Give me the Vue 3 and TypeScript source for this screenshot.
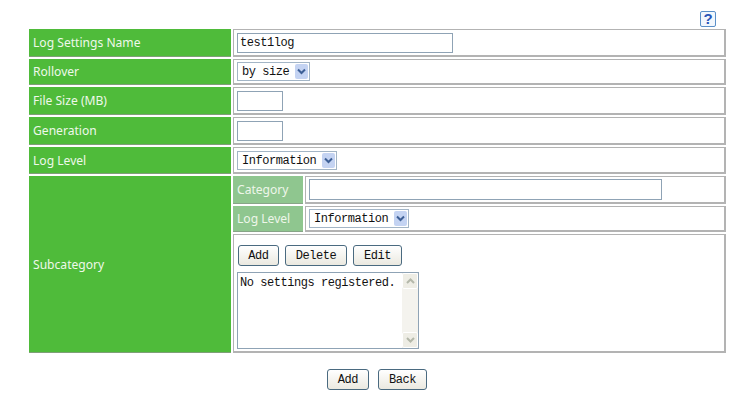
<script setup lang="ts">
const level = 'Information'
</script>

<template>
  <div class="page">
    <div class="help-row">
      <a class="help" href="#" aria-label="Help">?</a>
    </div>
    <div class="form">
      <div class="label r1">Log Settings Name</div>
      <div class="value r1"><input class="text name" value="test1log" /></div>

      <div class="label r2">Rollover</div>
      <div class="value r2">
        <div class="select rollover">
          <select><option>by size</option></select>
          <span class="arrow"><svg width="11" height="9" viewBox="0 0 11 9"><path d="M2 2.5 5.5 6 9 2.5" fill="none" stroke="#3d5f96" stroke-width="2" /></svg></span>
        </div>
      </div>

      <div class="label r3">File Size (MB)</div>
      <div class="value r3"><input class="text small" /></div>

      <div class="label r3">Generation</div>
      <div class="value r3"><input class="text small" /></div>

      <div class="label r5">Log Level</div>
      <div class="value r5">
        <div class="select level">
          <select><option>{{ level }}</option></select>
          <span class="arrow"><svg width="11" height="9" viewBox="0 0 11 9"><path d="M2 2.5 5.5 6 9 2.5" fill="none" stroke="#3d5f96" stroke-width="2" /></svg></span>
        </div>
      </div>

      <div class="label sub-label">Subcategory</div>
      <div class="sub">
        <div class="sublabel s1">Category</div>
        <div class="value s1"><input class="text category" /></div>
        <div class="sublabel s2">Log Level</div>
        <div class="value s2">
          <div class="select level sublevel">
            <select><option>{{ level }}</option></select>
            <span class="arrow"><svg width="11" height="9" viewBox="0 0 11 9"><path d="M2 2.5 5.5 6 9 2.5" fill="none" stroke="#3d5f96" stroke-width="2" /></svg></span>
          </div>
        </div>
        <div class="value list-cell">
          <div class="buttons">
            <button class="add">Add</button>
            <button class="delete">Delete</button>
            <button class="edit">Edit</button>
          </div>
          <div class="list">
            <textarea readonly>No settings registered.</textarea>
            <div class="scroll">
              <span class="sb"><svg width="11" height="8" viewBox="0 0 11 8"><path d="M2 6 5.5 2.5 9 6" fill="none" stroke="#b4b8aa" stroke-width="2" /></svg></span>
              <span class="sb"><svg width="11" height="8" viewBox="0 0 11 8"><path d="M2 2 5.5 5.5 9 2" fill="none" stroke="#b4b8aa" stroke-width="2" /></svg></span>
            </div>
          </div>
        </div>
      </div>
    </div>
    <div class="actions">
      <button class="add-main">Add</button>
      <button class="back">Back</button>
    </div>
  </div>
</template>

<style scoped>
.page {
  width: 745px;
  height: 414px;
  background: #fff;
  overflow: hidden;
  box-sizing: border-box;
  padding: 11px 19px 0 29px;
  font-family: "Noto Sans", sans-serif;
}
.help-row {
  height: 18px;
  display: flex;
  justify-content: flex-end;
  padding-right: 10px;
}
.help {
  width: 16px;
  height: 16px;
  box-sizing: border-box;
  border: 1px solid #5a8fc8;
  border-radius: 2px;
  background: #f2f7fd;
  color: #2a55b8;
  font: bold 15px/14px "Liberation Sans", sans-serif;
  text-align: center;
  text-decoration: none;
}
.form {
  width: 697px;
  display: grid;
  grid-template-columns: 202px 493px;
  column-gap: 2px;
  row-gap: 2px;
  grid-template-rows: 28px 26px 28px 28px 27px 177px;
}
.label {
  background: #4fbb3a;
  border-bottom: 1px solid #7f9f78;
  box-sizing: border-box;
  color: #eef8ea;
  font-size: 12.1px;
  padding-left: 4px;
  display: flex;
  align-items: center;
}
.value {
  box-sizing: border-box;
  border: 1px solid #b3b3b3;
  border-right-width: 2px;
  border-bottom-width: 2px;
  padding-left: 3px;
  display: flex;
  align-items: center;
  background: #fff;
}
.text {
  box-sizing: border-box;
  height: 20px;
  border: 1px solid #8fa3b5;
  outline: none;
  padding: 1px 2px 0;
  font: 12px "Liberation Mono", monospace;
  letter-spacing: -0.45px;
  color: #111;
  background: #fff;
}
.name { width: 216px; }
.small { width: 46px; }
.category { width: 353px; height: 21px; }
.select {
  position: relative;
  box-sizing: border-box;
  border: 1px solid #a3b5c6;
  height: 19px;
}
.select select {
  display: block;
  appearance: none;
  border: none;
  outline: none;
  background: #fff;
  width: 100%;
  height: 100%;
  padding: 1px 0 0 4px;
  font: 12px "Liberation Mono", monospace;
  letter-spacing: -0.45px;
  color: #111;
}
.arrow {
  position: absolute;
  top: 1px;
  right: 1px;
  bottom: 1px;
  width: 13px;
  background: #c4d3f2;
  border-radius: 2px;
  display: flex;
  align-items: center;
  justify-content: center;
}
.rollover { width: 73px; }
.level { width: 100px; }
.sublevel { width: 100px; }
.sub {
  display: grid;
  grid-template-columns: 70px 421px;
  grid-template-rows: 28px 26px 119px;
  gap: 2px;
}
.sublabel {
  background: #8fc68f;
  border-bottom: 1px solid #87a587;
  box-sizing: border-box;
  color: #eef6ea;
  font-size: 12.1px;
  padding-left: 4px;
  display: flex;
  align-items: center;
}
.list-cell {
  grid-column: 1 / 3;
  flex-direction: column;
  align-items: flex-start;
  padding: 10px 0 0 3px;
}
.buttons {
  display: flex;
  gap: 6px;
  height: 27px;
  align-items: flex-start;
  padding-left: 1px;
}
button {
  box-sizing: border-box;
  height: 21px;
  border: 1px solid #4a6a80;
  border-radius: 3px;
  background: linear-gradient(#fff, #ebe9e0);
  padding: 1px 0 0;
  font: 12px "Liberation Mono", monospace;
  letter-spacing: -0.45px;
  color: #111;
}
.add { width: 41px; }
.delete { width: 62px; }
.edit { width: 49px; }
.add-main { width: 42px; }
.back { width: 49px; }
.list {
  position: relative;
  width: 182px;
  height: 77px;
}
.list textarea {
  width: 100%;
  height: 100%;
  box-sizing: border-box;
  resize: none;
  overflow: hidden;
  border: 1px solid #8fa3b5;
  outline: none;
  padding: 3px 2px;
  font: 12px "Liberation Mono", monospace;
  letter-spacing: -0.45px;
  color: #111;
  display: block;
}
.scroll {
  position: absolute;
  top: 1px;
  right: 1px;
  bottom: 1px;
  width: 16px;
  background: #f4f3ee;
  display: flex;
  flex-direction: column;
  justify-content: space-between;
}
.sb {
  height: 16px;
  background: #eeede5;
  border: 1px solid #fff;
  box-sizing: border-box;
  border-radius: 2px;
  display: flex;
  align-items: center;
  justify-content: center;
}
.actions {
  display: flex;
  gap: 9px;
  margin-top: 16px;
  padding-left: 298px;
}
</style>
